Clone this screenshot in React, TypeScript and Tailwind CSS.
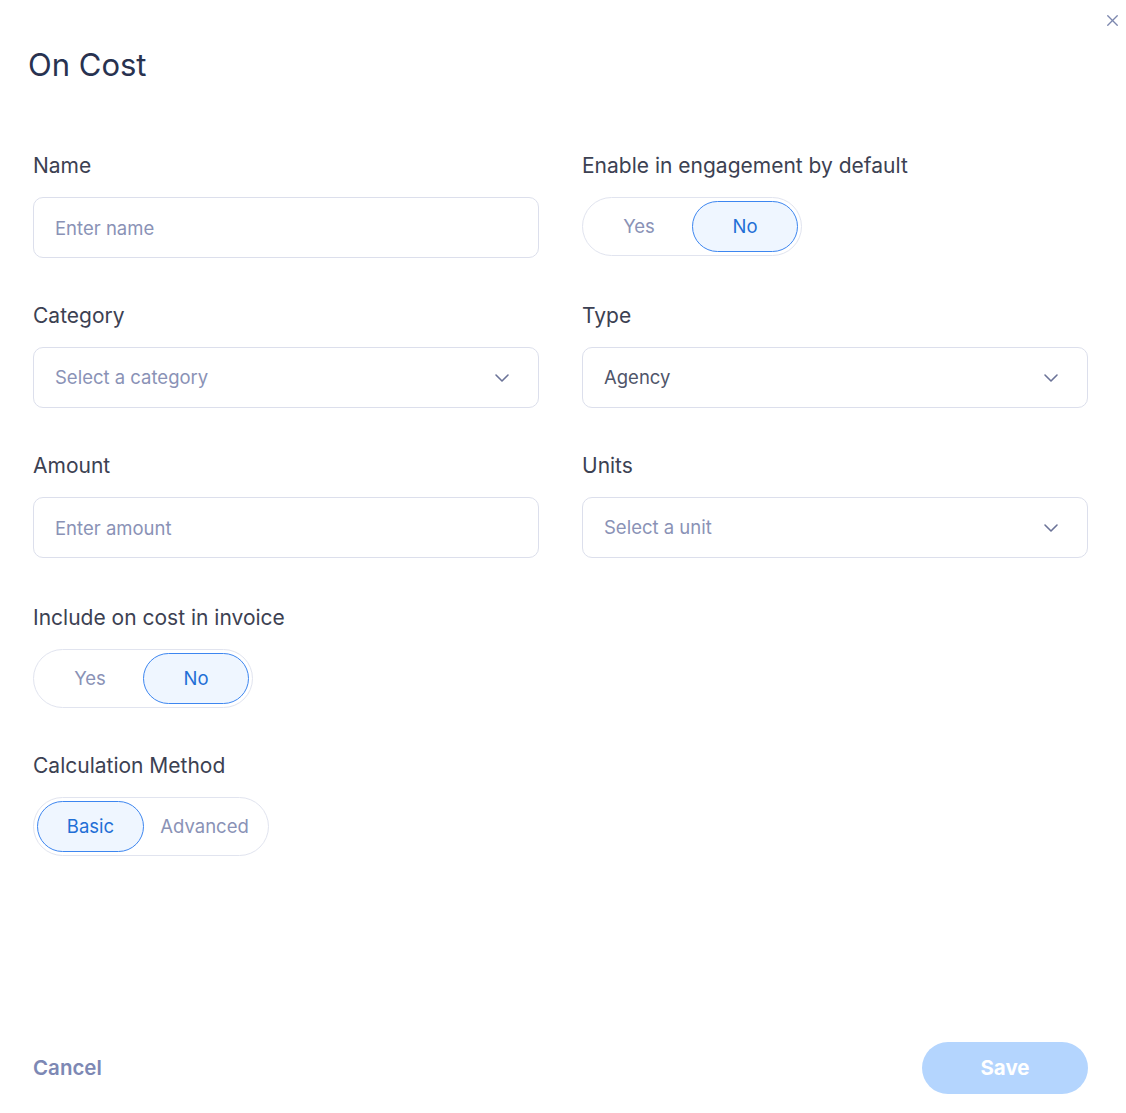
import { ChevronDown, X } from 'lucide-react'

type Option = { label: string; width: string }

function Segmented({ options, selected }: { options: Option[]; selected: number }) {
  return (
    <div className="inline-flex rounded-full border border-[#e1e4ef] bg-white p-[3px]">
      {options.map((opt, i) => (
        <button
          key={opt.label}
          type="button"
          className={
            i === selected
              ? `${opt.width} h-[51px] rounded-full border-[1.5px] border-[#3d86f0] bg-[#eff6ff] text-[18.5px] text-[#1f6fd6]`
              : `${opt.width} h-[51px] rounded-full border-[1.5px] border-transparent text-[18.5px] text-[#8a92b6]`
          }
        >
          {opt.label}
        </button>
      ))}
    </div>
  )
}

function Field({ label, className, children }: { label: string; className?: string; children: React.ReactNode }) {
  return (
    <div className={`flex flex-col ${className ?? ''}`}>
      <label className="mb-[17px] h-[28px] text-[21px] leading-[28px] text-[#3c4152]">{label}</label>
      {children}
    </div>
  )
}

function TextInput({ placeholder }: { placeholder: string }) {
  return (
    <input
      placeholder={placeholder}
      className="h-[61px] w-full rounded-[10px] border border-[#dcdfec] px-[21px] text-[18.5px] text-[#4f556a] outline-none placeholder:text-[#8a92b6]"
    />
  )
}

function Select({ value, placeholder }: { value?: string; placeholder: string }) {
  return (
    <div className="flex h-[61px] w-full items-center justify-between rounded-[10px] border border-[#dcdfec] pl-[21px] pr-[24px]">
      <span className={value ? 'text-[18.5px] text-[#4f556a]' : 'text-[18.5px] text-[#8a92b6]'}>{value ?? placeholder}</span>
      <ChevronDown className="h-[24px] w-[24px] text-[#6b7398]" strokeWidth={1.6} />
    </div>
  )
}

export default function App() {
  return (
    <div className="relative flex h-[1113px] w-[1126px] flex-col bg-white font-['Inter',sans-serif]">
      <button type="button" className="absolute right-[4px] top-[11px] text-[#7c87ae]">
        <X className="h-[19px] w-[19px]" strokeWidth={1.7} />
      </button>

      <h1 className="pl-[28px] pt-[47px] text-[31px] leading-[36px] font-normal text-[#283250]">On Cost</h1>

      <div className="mt-[69px] flex flex-col gap-[44px] pl-[33px] pr-[38px]">
        <div className="grid grid-cols-2 gap-x-[43px]">
          <Field label="Name">
            <TextInput placeholder="Enter name" />
          </Field>
          <Field label="Enable in engagement by default">
            <div>
              <Segmented
                options={[
                  { label: 'Yes', width: 'w-[106px]' },
                  { label: 'No', width: 'w-[106px]' },
                ]}
                selected={1}
              />
            </div>
          </Field>
        </div>

        <div className="grid grid-cols-2 gap-x-[43px]">
          <Field label="Category">
            <Select placeholder="Select a category" />
          </Field>
          <Field label="Type">
            <Select value="Agency" placeholder="Select a type" />
          </Field>
        </div>

        <div className="grid grid-cols-2 gap-x-[43px]">
          <Field label="Amount">
            <TextInput placeholder="Enter amount" />
          </Field>
          <Field label="Units">
            <Select placeholder="Select a unit" />
          </Field>
        </div>

        <Field label="Include on cost in invoice" className="mt-[2px]">
          <div>
            <Segmented
              options={[
                { label: 'Yes', width: 'w-[106px]' },
                { label: 'No', width: 'w-[106px]' },
              ]}
              selected={1}
            />
          </div>
        </Field>

        <Field label="Calculation Method">
          <div>
            <Segmented
              options={[
                { label: 'Basic', width: 'w-[107px]' },
                { label: 'Advanced', width: 'w-[121px]' },
              ]}
              selected={0}
            />
          </div>
        </Field>
      </div>

      <div className="mt-auto flex items-center justify-between pb-[19px] pl-[33px] pr-[38px]">
        <button type="button" className="text-[20.5px] font-semibold text-[#7d88b4]">
          Cancel
        </button>
        <button
          type="button"
          className="h-[52px] w-[166px] rounded-full bg-[#b4d5fe] text-[20.5px] font-bold text-white"
        >
          Save
        </button>
      </div>
    </div>
  )
}
